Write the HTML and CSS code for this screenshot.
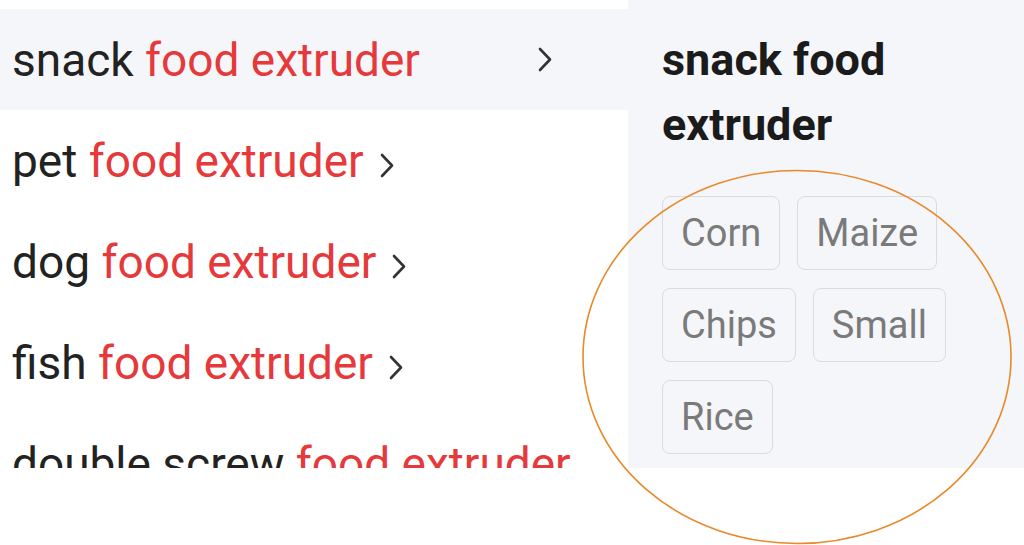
FILE: index.html
```html
<!DOCTYPE html>
<html lang="en">
<head>
    <meta charset="UTF-8">
    <meta name="viewport" content="width=device-width, initial-scale=1.0">
    <title>Search Suggestions</title>
    <link rel="stylesheet" href="styles.css">
</head>
<body>
    <div class="suggest">
        <!-- keyword list -->
        <ul class="keywords">
            <li class="keyword active">
                <span>snack <em>food extruder</em></span>
                <svg class="chevron" viewBox="0 0 16 27"><polyline points="3,3 13,13.5 3,24"/></svg>
            </li>
            <li class="keyword">
                <span>pet <em>food extruder</em></span>
                <svg class="chevron" viewBox="0 0 16 27"><polyline points="3,3 13,13.5 3,24"/></svg>
            </li>
            <li class="keyword">
                <span>dog <em>food extruder</em></span>
                <svg class="chevron" viewBox="0 0 16 27"><polyline points="3,3 13,13.5 3,24"/></svg>
            </li>
            <li class="keyword">
                <span>fish <em>food extruder</em></span>
                <svg class="chevron" viewBox="0 0 16 27"><polyline points="3,3 13,13.5 3,24"/></svg>
            </li>
            <li class="keyword">
                <span>double screw <em>food extruder</em></span>
            </li>
        </ul>

        <!-- related tags for the active keyword -->
        <div class="related">
            <h2>snack food extruder</h2>
            <div class="tags">
                <a class="tag">Corn</a>
                <a class="tag">Maize</a>
                <a class="tag">Chips</a>
                <a class="tag">Small</a>
                <a class="tag">Rice</a>
            </div>
        </div>
    </div>

    <!-- annotation circle -->
    <svg class="mark" width="1024" height="545" viewBox="0 0 1024 545"><ellipse cx="797" cy="357" rx="214" ry="186.5"/></svg>
</body>
</html>
```

FILE: styles.css
```css
html, body {
    height: 545px;
}
body {
    position: relative;
    font-family: Roboto, "Noto Sans", sans-serif;
    background-color: #ffffff;
    color: #222222;
    margin: 0;
    overflow: hidden;
}
.suggest {
    display: flex;
    height: 468px;
}
.keywords {
    list-style: none;
    width: 628px;
    margin: 0;
    padding: 9px 0 0;
    height: 459px;
    overflow: hidden;
    flex-shrink: 0;
}
.keyword {
    display: flex;
    align-items: center;
    height: 101px;
    padding-left: 12px;
    font-size: 46px;
    white-space: nowrap;
}
.keyword em {
    font-style: normal;
    color: #e5393b;
}
.keyword .chevron {
    width: 16px;
    height: 27px;
    margin-left: 15px;
    margin-top: 9px;
}
.keyword.active {
    background-color: #f5f6fa;
}
.keyword.active .chevron {
    margin-left: auto;
    margin-right: 75px;
    margin-top: 0;
}
.chevron polyline {
    fill: none;
    stroke: #333333;
    stroke-width: 2.6;
    stroke-linecap: round;
    stroke-linejoin: round;
}
.related {
    flex: 1;
    background-color: #f5f6fa;
    padding: 27px 34px 0;
    overflow: hidden;
}
.related h2 {
    font-size: 45px;
    font-weight: 700;
    line-height: 65px;
    color: #1b1b1b;
    margin: 0 0 39px;
}
.tags {
    display: flex;
    flex-wrap: wrap;
    gap: 18px 17px;
}
.tag {
    border: 1px solid #d8dbe0;
    border-radius: 8px;
    padding: 10px 18px;
    font-size: 38px;
    line-height: 52px;
    color: #7a7a7a;
}
.mark {
    position: absolute;
    left: 0;
    top: 0;
    overflow: visible;
    pointer-events: none;
}
.mark ellipse {
    fill: none;
    stroke: #e8892a;
    stroke-width: 1.6;
}
```
